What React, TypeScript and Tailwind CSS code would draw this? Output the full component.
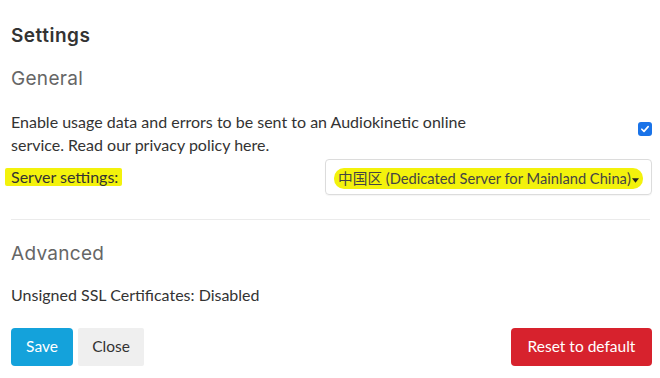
import React from "react";

const body = "font-['Lato','Liberation_Sans','Noto_Sans_CJK_SC',sans-serif]";
const head = "font-['Inter','Noto_Sans',sans-serif]";

export default function App() {
  return (
    <div className={`w-[660px] h-[378px] bg-white overflow-hidden ${body} text-[#333]`}>
      <div className="pl-[11px] pr-[8px] pt-[24px]">
        <h1 className={`${head} text-[19px] font-semibold tracking-[0.5px] text-[#333] leading-[24px]`}>Settings</h1>
        <h2 className={`${head} text-[19px] font-normal tracking-[0.3px] text-[#666] leading-[24px] mt-[19px]`}>General</h2>

        <div className="flex items-center justify-between mt-[19px]">
          <p className="text-[16px] leading-[23px] w-[480px]">
            Enable usage data and errors to be sent to an Audiokinetic online service. Read our privacy policy here.
          </p>
          <span className="w-[14px] h-[14px] rounded-[3px] bg-[#1a73e8] flex items-center justify-center mt-[-8px]">
            <svg viewBox="0 0 12 12" className="w-[10px] h-[10px]">
              <path d="M2.2 6.3 L4.8 8.8 L9.8 3.2" fill="none" stroke="white" strokeWidth="2" strokeLinecap="round" strokeLinejoin="round" />
            </svg>
          </span>
        </div>

        <div className="flex items-center justify-between mt-[3px]">
          <span className="text-[16px] leading-[18px] ml-[-6px] pl-[6px] pr-[4px] bg-[#f3f20c] rounded-[2px]">
            Server settings:
          </span>
          <div className="w-[327px] h-[36px] border border-[#dcdcdc] rounded-[4px] flex items-center pl-[8px] shadow-[0_1px_1px_rgba(0,0,0,0.04)]">
            <span className="flex items-center h-[21px] bg-[#f3f20c] rounded-[10px] pl-[4px] pr-[4px] text-[14.7px] text-[#444] whitespace-nowrap mt-[2px]">
              中国区 (Dedicated Server for Mainland China)
              <svg viewBox="0 0 8 5" className="w-[7px] h-[5px] ml-[1px] mt-[4px]">
                <path d="M0 0 L8 0 L4 5 Z" fill="#222" />
              </svg>
            </span>
          </div>
        </div>

        <div className="h-px bg-[#ebebeb] mt-[24px] mr-[2px]" />

        <h2 className={`${head} text-[19px] font-normal tracking-[0.3px] text-[#666] leading-[24px] mt-[22px]`}>Advanced</h2>

        <p className="text-[16px] leading-[20px] mt-[19px]">Unsigned SSL Certificates: Disabled</p>

        <div className="flex items-center justify-between mt-[23px]">
          <div className="flex gap-[5px]">
            <button className="h-[38px] w-[62px] rounded-[4px] bg-[#14a2db] text-white text-[15.5px]">Save</button>
            <button className="h-[38px] w-[66px] rounded-[2px] bg-[#efefef] text-[#333] text-[15.5px]">Close</button>
          </div>
          <button className="h-[38px] w-[141px] rounded-[4px] bg-[#d7222d] text-white text-[15.5px]">Reset to default</button>
        </div>
      </div>
    </div>
  );
}
